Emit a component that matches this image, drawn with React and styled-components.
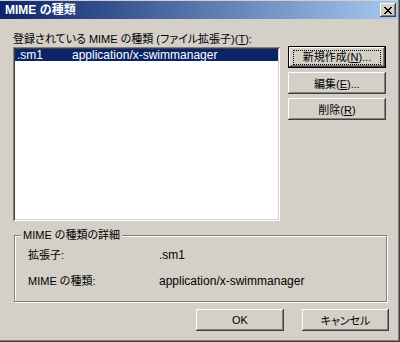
import styled, { createGlobalStyle, css } from "styled-components";

const GlobalStyle = createGlobalStyle`
  html, body {
    margin: 0;
    padding: 0;
    background: #d4d0c8;
  }
  body {
    font-family: "Liberation Sans", "Noto Sans CJK JP", sans-serif;
    font-size: 11px;
    font-feature-settings: "palt";
    color: #000;
  }
`;

const raised = css`
  box-shadow: inset -1px -1px #404040, inset 1px 1px #ffffff,
    inset -2px -2px #808080, inset 2px 2px #d4d0c8;
`;

const Window = styled.div`
  width: 400px;
  height: 342px;
  box-sizing: border-box;
  padding: 1px 2px 2px 0;
  background: #d4d0c8;
  box-shadow: inset -1px -1px #404040, inset -2px -2px #808080;
  display: flex;
  flex-direction: column;
  overflow: hidden;
`;

const TitleBar = styled.div`
  height: 18px;
  display: flex;
  align-items: center;
  justify-content: space-between;
  padding: 0 2px 0 5px;
  background: linear-gradient(to right, #0a246a, #a6caf0);
`;

const Title = styled.span`
  color: #fff;
  font-weight: bold;
  font-size: 12px;
  font-feature-settings: normal;
  line-height: 14px;
`;

const CloseButton = styled.button`
  width: 16px;
  height: 14px;
  padding: 0;
  border: none;
  background: #d4d0c8;
  ${raised};
  display: flex;
  align-items: center;
  justify-content: center;
`;

const Body = styled.div`
  flex: 1;
  padding: 14px 0 0 13px;
  display: flex;
  flex-direction: column;
`;

const TopRow = styled.div`
  display: flex;
`;

const ListColumn = styled.div`
  width: 267px;
  display: flex;
  flex-direction: column;
`;

const Label = styled.div`
  height: 14px;
  line-height: 13px;
  white-space: nowrap;
`;

const ListBox = styled.div`
  height: 174px;
  box-sizing: border-box;
  padding: 2px;
  background: #fff;
  box-shadow: inset 1px 1px #808080, inset -1px -1px #ffffff,
    inset 2px 2px #404040, inset -2px -2px #d4d0c8;
`;

const ListRow = styled.div`
  height: 12px;
  display: flex;
  align-items: center;
  padding-left: 2px;
  font-size: 12px;
  line-height: 12px;
  white-space: nowrap;
  background: ${(p) => (p.selected ? "#0a246a" : "transparent")};
  color: ${(p) => (p.selected ? "#fff" : "#000")};
`;

const ExtCell = styled.span`
  width: 55px;
`;

const ButtonColumn = styled.div`
  margin-left: 8px;
  padding-top: 13px;
  width: 98px;
  display: flex;
  flex-direction: column;
  gap: 4px;
`;

const Button = styled.button`
  width: ${(p) => p.width || 98}px;
  height: 22px;
  padding: 0;
  border: none;
  background: #d4d0c8;
  font-family: inherit;
  font-size: 11px;
  font-feature-settings: "palt";
  color: #000;
  ${(p) =>
    p.primary
      ? css`
          box-shadow: inset 0 0 0 1px #000, inset -2px -2px #404040,
            inset 2px 2px #ffffff, inset -3px -3px #808080;
        `
      : raised};
`;

const FocusRing = styled.span`
  display: inline-block;
  box-sizing: border-box;
  outline: 1px dotted #000;
  width: 86px;
  line-height: 13px;
`;

const Underline = styled.u`
  text-decoration: underline;
  text-underline-offset: 1px;
`;

const Group = styled.div`
  position: relative;
  margin: 14px 0 0 1px;
  width: 373px;
  height: 67px;
  box-sizing: border-box;
  border: 1px solid #808080;
  box-shadow: inset 1px 1px #fff, 1px 1px #fff;
  padding: 12px 0 0 13px;
  display: flex;
  flex-direction: column;
  gap: 12px;
`;

const Legend = styled.span`
  position: absolute;
  top: -8px;
  left: 6px;
  padding: 0 2px;
  background: #d4d0c8;
  line-height: 14px;
  white-space: nowrap;
`;

const DetailRow = styled.div`
  display: flex;
  align-items: center;
  line-height: 14px;
  white-space: nowrap;
`;

const DetailKey = styled.span`
  width: 131px;
`;

const DetailValue = styled.span`
  font-size: 12px;
`;

const Footer = styled.div`
  margin-top: 7px;
  padding-right: 9px;
  display: flex;
  justify-content: flex-end;
  gap: 18px;
`;

const CloseGlyph = () => (
  <svg width="8" height="7" viewBox="0 0 8 7" shapeRendering="crispEdges">
    <path
      d="M0 0h2v1H0zM6 0h2v1H6zM1 1h2v1H1zM5 1h2v1H5zM2 2h4v1H2zM3 3h2v1H3zM2 4h4v1H2zM1 5h2v1H1zM5 5h2v1H5zM0 6h2v1H0zM6 6h2v1H6z"
      fill="#000"
    />
  </svg>
);

export default function App() {
  return (
    <>
      <GlobalStyle />
      <Window>
        <TitleBar>
          <Title>MIME の種類</Title>
          <CloseButton aria-label="閉じる">
            <CloseGlyph />
          </CloseButton>
        </TitleBar>
        <Body>
          <TopRow>
            <ListColumn>
              <Label>
                登録されている MIME の種類 (ファイル拡張子)(<Underline>T</Underline>):
              </Label>
              <ListBox>
                <ListRow selected>
                  <ExtCell>.sm1</ExtCell>
                  <span>application/x-swimmanager</span>
                </ListRow>
              </ListBox>
            </ListColumn>
            <ButtonColumn>
              <Button primary>
                <FocusRing>
                  新規作成(<Underline>N</Underline>)...
                </FocusRing>
              </Button>
              <Button>
                編集(<Underline>E</Underline>)...
              </Button>
              <Button>
                削除(<Underline>R</Underline>)
              </Button>
            </ButtonColumn>
          </TopRow>
          <Group>
            <Legend>MIME の種類の詳細</Legend>
            <DetailRow>
              <DetailKey>拡張子:</DetailKey>
              <DetailValue>.sm1</DetailValue>
            </DetailRow>
            <DetailRow>
              <DetailKey>MIME の種類:</DetailKey>
              <DetailValue>application/x-swimmanager</DetailValue>
            </DetailRow>
          </Group>
          <Footer>
            <Button width={88}>OK</Button>
            <Button width={87}>キャンセル</Button>
          </Footer>
        </Body>
      </Window>
    </>
  );
}
